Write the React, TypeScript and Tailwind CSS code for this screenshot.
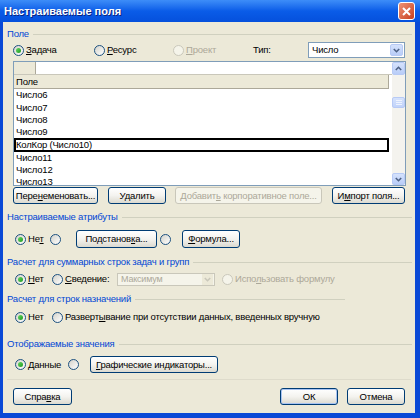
import React from "react";

function Radio({ checked = false, disabled = false }: { checked?: boolean; disabled?: boolean }) {
  return (
    <span
      className={
        disabled
          ? "w-[11px] h-[11px] shrink-0 rounded-full border border-[#CAC8BB] bg-[#F5F4EA]"
          : "w-[11px] h-[11px] shrink-0 rounded-full border border-[#1C5180] bg-linear-to-br from-[#D4D3CB] to-white flex items-center justify-center"
      }
    >
      {checked && <span className="w-[5px] h-[5px] rounded-full bg-linear-to-br from-[#62D862] to-[#1A9A1A]" />}
    </span>
  );
}

function Btn({
  className,
  children,
  disabled = false,
  primary = false,
}: {
  className: string;
  children: React.ReactNode;
  disabled?: boolean;
  primary?: boolean;
}) {
  const look = disabled
    ? "border-[#C9C7BA] bg-[#F5F4EA] text-[#ACA899]"
    : primary
    ? "border-[#003C74] bg-linear-to-b from-white via-[#F4F3EF] to-[#DCDAD0] text-black shadow-[inset_0_0_0_1px_#A9C4F2]"
    : "border-[#003C74] bg-linear-to-b from-white via-[#F4F3EF] to-[#DCDAD0] text-black";
  return (
    <div
      className={`${className} h-full shrink-0 flex items-center justify-center whitespace-nowrap overflow-hidden rounded-[3px] border ${look}`}
    >
      {children}
    </div>
  );
}

function Chevron({ up = false, color = "#4D6185" }: { up?: boolean; color?: string }) {
  return (
    <svg width="7" height="5" viewBox="0 0 7 5">
      <path
        d={up ? "M0.8 4 L3.5 1.3 L6.2 4" : "M0.8 1 L3.5 3.7 L6.2 1"}
        fill="none"
        stroke={color}
        strokeWidth="1.6"
      />
    </svg>
  );
}

function ScrollBtn({ up = false, className }: { up?: boolean; className: string }) {
  return (
    <div
      className={`${className} shrink-0 rounded-[2px] border border-[#B7CAF5] bg-linear-to-b from-[#D5E2FC] to-[#B9CDF8] flex items-center justify-center`}
    >
      <Chevron up={up} />
    </div>
  );
}

function Row({ text, selected = false }: { text: string; selected?: boolean }) {
  return (
    <div
      className={
        selected
          ? "h-[14px] w-[375px] border-2 border-black flex items-center shrink-0"
          : "h-[12.2px] flex items-center pl-[2px] shrink-0"
      }
    >
      {text}
    </div>
  );
}

export default function App() {
  return (
    <div className="w-[420px] h-[418px] bg-[#0A49D6] flex flex-col overflow-hidden font-['Liberation_Sans',Arial,sans-serif] text-[9.5px] tracking-[-0.2px] leading-none whitespace-nowrap">
      {/* title bar */}
      <div className="h-[22px] shrink-0 flex items-center pl-[4px] pr-[5px] bg-linear-to-b from-[#3D8DF8] via-[#0A5CE8] to-[#0550DC]">
        <span className="text-white font-bold text-[11px] tracking-normal [text-shadow:1px_1px_#0A2480]">
          Настраиваемые поля
        </span>
        <div className="flex-1" />
        <div className="w-[17px] h-[18px] rounded-[3px] border border-white bg-linear-to-br from-[#EE9274] to-[#C63C1A] flex items-center justify-center">
          <svg width="9" height="9" viewBox="0 0 9 9">
            <path d="M1 1 L8 8 M8 1 L1 8" stroke="white" strokeWidth="2" />
          </svg>
        </div>
      </div>

      {/* body */}
      <div className="flex-1 ml-[3px] mr-[5px] mb-[5px] bg-[#ECE9D8] flex flex-col">
        {/* Поле */}
        <div className="mt-[6px] h-[12px] flex items-center pl-[4px]">
          <span className="text-[#0046D5]">Поле</span>
          <div className="flex-1 h-px bg-[#D0D0BF] ml-[4px] mr-[3px]" />
        </div>

        <div className="mt-[2px] h-[16px] flex items-center pl-[10px]">
          <div className="w-[81px] flex items-center gap-[2px]">
            <Radio checked />
            <span>
              <u>З</u>адача
            </span>
          </div>
          <div className="w-[79px] flex items-center gap-[2px]">
            <Radio />
            <span>
              <u>Р</u>есурс
            </span>
          </div>
          <div className="w-[80px] flex items-center gap-[2px] text-[#ACA899]">
            <Radio disabled />
            <span>
              <u>П</u>роект
            </span>
          </div>
          <div className="w-[55px]">Тип:</div>
          <div className="w-[97px] h-[16px] border border-[#7F9DB9] bg-white flex items-center">
            <span className="flex-1 pl-[3px]">Число</span>
            <ScrollBtn className="w-[13px] h-[12px] mr-[1px]" />
          </div>
        </div>

        {/* list */}
        <div className="mt-[3px] ml-[10px] w-[393px] h-[125px] border border-[#7F9DB9] bg-white flex overflow-hidden">
          <div className="w-[378px] flex flex-col overflow-hidden">
            <div className="h-[13px] shrink-0 flex border-b border-[#C9C7BA]">
              <div className="w-[22px] bg-[#ECE9D8] border-r border-[#ACA899]" />
              <div className="flex-1 bg-white" />
            </div>
            <div className="h-[14px] shrink-0 w-[375px] bg-[#ECE9D8] border-b border-r border-[#ACA899] flex items-center pl-[2px]">
              Поле
            </div>
            <Row text="Число6" />
            <Row text="Число7" />
            <Row text="Число8" />
            <Row text="Число9" />
            <Row text="КолКор (Число10)" selected />
            <Row text="Число11" />
            <Row text="Число12" />
            <Row text="Число13" />
          </div>
          <div className="w-[13px] bg-[#F4F3EE] flex flex-col">
            <ScrollBtn up className="w-[13px] h-[13px]" />
            <div className="mt-[22px] h-[11px] w-[13px] rounded-[2px] border border-[#B7CAF5] bg-linear-to-b from-[#D5E2FC] to-[#C1D3FA] flex flex-col items-center justify-center gap-[1px]">
              <div className="w-[6px] h-px bg-[#EEF3FE]" />
              <div className="w-[6px] h-px bg-[#EEF3FE]" />
              <div className="w-[6px] h-px bg-[#EEF3FE]" />
            </div>
            <div className="flex-1" />
            <ScrollBtn className="w-[13px] h-[12px]" />
          </div>
        </div>

        {/* list buttons */}
        <div className="mt-[1px] h-[17px] flex pl-[10px]">
          <Btn className="w-[85px]">
            <span>
              Пере<u>н</u>еменовать...
            </span>
          </Btn>
          <Btn className="w-[58px] ml-[10px]">Удалить</Btn>
          <Btn className="w-[147px] ml-[9px]" disabled>
            <span>
              Добавит<u>ь</u> корпоративное поле...
            </span>
          </Btn>
          <Btn className="w-[73px] ml-[10px]">
            <span>
              И<u>м</u>порт поля...
            </span>
          </Btn>
        </div>

        {/* Настраиваемые атрибуты */}
        <div className="mt-[7px] h-[12px] flex items-center pl-[4px]">
          <span className="text-[#0046D5]">Настраиваемые атрибуты</span>
          <div className="flex-1 h-px bg-[#D0D0BF] ml-[4px] mr-[3px]" />
        </div>
        <div className="mt-[7px] h-[18px] flex items-center pl-[12px]">
          <div className="w-[35px] flex items-center gap-[2px]">
            <Radio checked />
            <span>
              Не<u>т</u>
            </span>
          </div>
          <Radio />
          <Btn className="w-[81px] ml-[15px]">
            <span>
              Подстанов<u>к</u>а...
            </span>
          </Btn>
          <div className="ml-[3px]">
            <Radio />
          </div>
          <Btn className="w-[58px] ml-[11px]">
            <span>
              <u>Ф</u>ормула...
            </span>
          </Btn>
        </div>

        {/* Расчет для суммарных */}
        <div className="mt-[8px] h-[12px] flex items-center pl-[4px]">
          <span className="text-[#0046D5]">Расчет для суммарных строк задач и групп</span>
          <div className="flex-1 h-px bg-[#D0D0BF] ml-[4px] mr-[3px]" />
        </div>
        <div className="mt-[4px] h-[14px] flex items-center pl-[12px]">
          <div className="w-[37px] flex items-center gap-[2px]">
            <Radio checked />
            <span>
              <u>Н</u>ет
            </span>
          </div>
          <div className="w-[65px] flex items-center gap-[2px]">
            <Radio />
            <span>
              <u>С</u>ведение:
            </span>
          </div>
          <div className="w-[98px] h-[13px] border border-[#C9C7BA] bg-[#F5F4EA] flex items-center text-[#ACA899]">
            <span className="flex-1 pl-[3px] text-[9px]">Максимум</span>
            <div className="w-[11px] h-[11px] mr-[1px] bg-[#ECE9D8] flex items-center justify-center">
              <Chevron color="#C9C7BA" />
            </div>
          </div>
          <div className="ml-[7px] flex items-center gap-[2px] text-[#ACA899]">
            <Radio disabled />
            <span>
              Испо<u>л</u>ьзовать формулу
            </span>
          </div>
        </div>

        {/* Расчет для строк назначений */}
        <div className="mt-[7px] h-[12px] flex items-center pl-[4px]">
          <span className="text-[#0046D5]">Расчет для строк назначений</span>
          <div className="flex-1 h-px bg-[#D0D0BF] ml-[4px] mr-[70px]" />
        </div>
        <div className="mt-[5px] h-[14px] flex items-center pl-[12px]">
          <div className="w-[37px] flex items-center gap-[2px]">
            <Radio checked />
            <span>Нет</span>
          </div>
          <div className="flex items-center gap-[2px]">
            <Radio />
            <span>
              Разверт<u>ы</u>вание при отсутствии данных, введенных вручную
            </span>
          </div>
        </div>

        {/* Отображаемые значения */}
        <div className="mt-[14px] h-[12px] flex items-center pl-[4px]">
          <span className="text-[#0046D5]">Отображаемые значения</span>
          <div className="flex-1 h-px bg-[#D0D0BF] ml-[4px] mr-[3px]" />
        </div>
        <div className="mt-[6px] h-[17px] flex items-center pl-[12px]">
          <div className="w-[53px] flex items-center gap-[2px]">
            <Radio checked />
            <span>
              <u>Д</u>анные
            </span>
          </div>
          <Radio />
          <Btn className="w-[128px] ml-[11px]">
            <span>
              <u>Г</u>рафические индикаторы...
            </span>
          </Btn>
        </div>

        <div className="mt-[6px] h-px bg-[#DEDBCB] mx-[4px]" />

        {/* bottom buttons */}
        <div className="mt-[8px] h-[17px] flex pl-[10px] pr-[10px]">
          <Btn className="w-[59px]">
            <span>
              Спра<u>в</u>ка
            </span>
          </Btn>
          <div className="flex-1" />
          <Btn className="w-[58px]" primary>
            ОК
          </Btn>
          <Btn className="w-[58px] ml-[9px]">Отмена</Btn>
        </div>
      </div>
    </div>
  );
}
